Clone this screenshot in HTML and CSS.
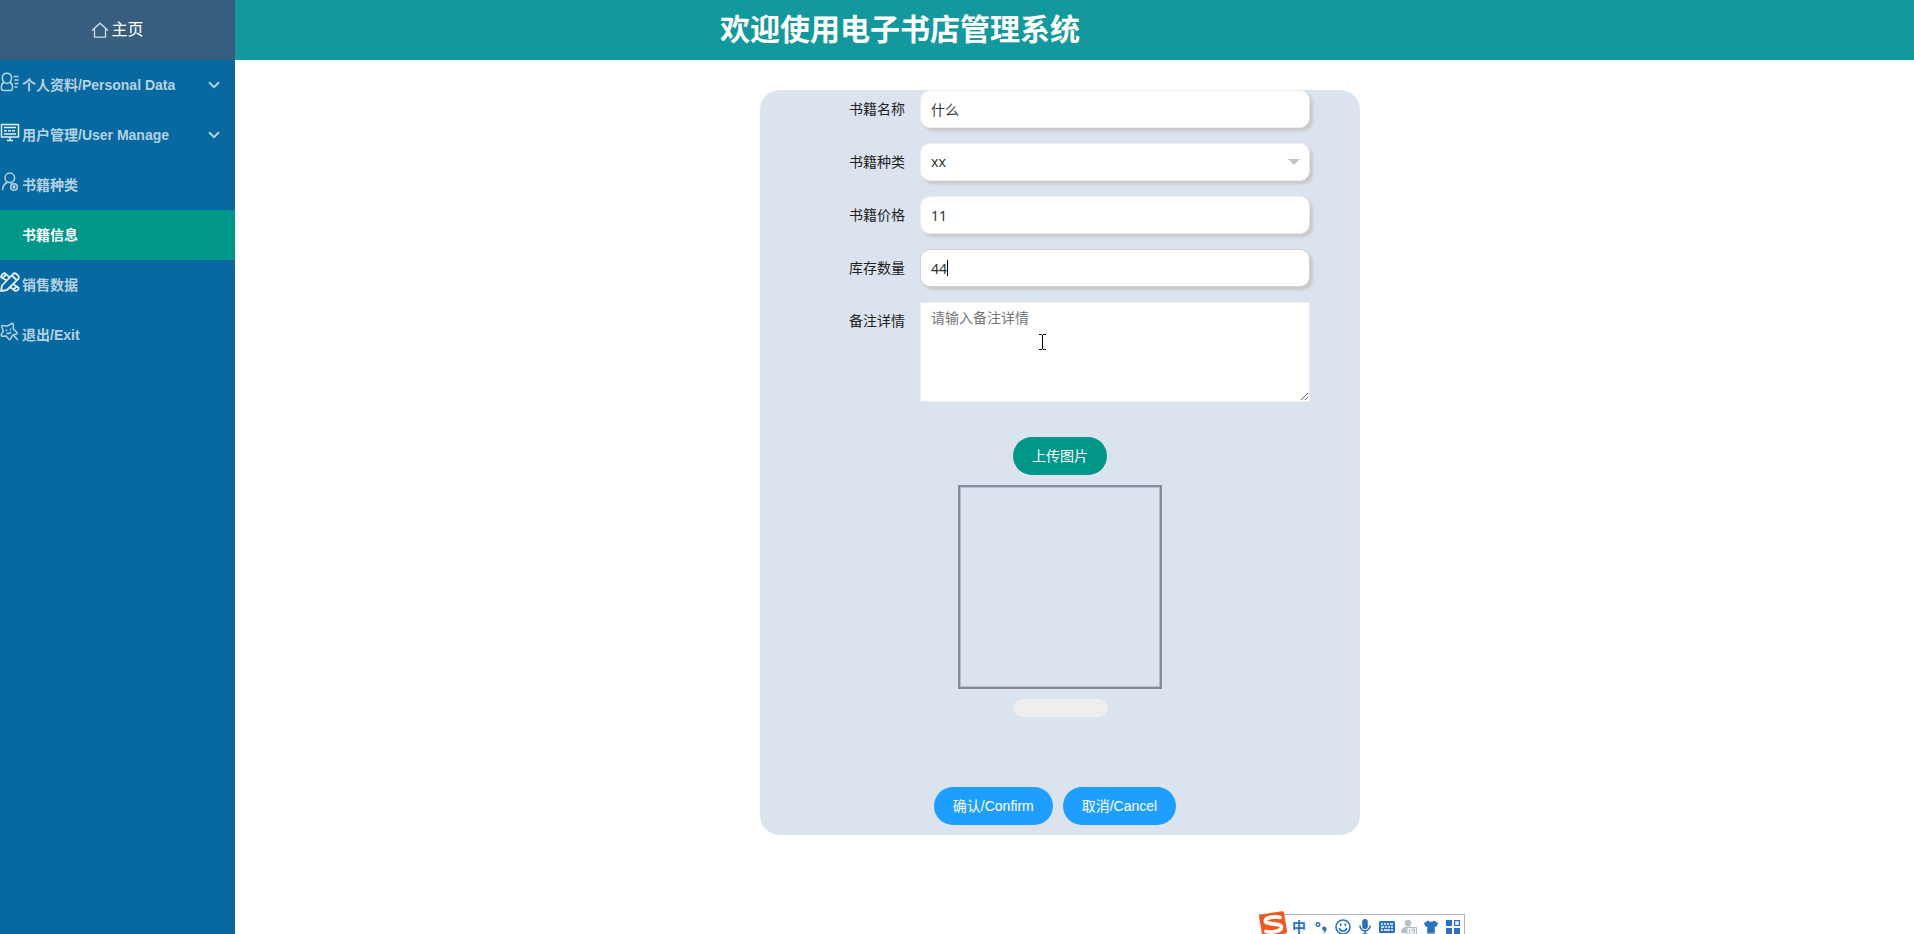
FILE: index.html
```
<!DOCTYPE html>
<html lang="zh-CN">
<head>
<meta charset="utf-8">
<meta name="viewport" content="width=device-width, initial-scale=1.0">
<title>电子书店管理系统</title>
<link rel="stylesheet" href="styles.css">
</head>
<body>
<div class="layout">
	<aside class="side">
		<a class="home" href="#">
			<svg class="home-icon" width="18" height="16" viewBox="0 0 18 16"><path d="M1 8.500 9 1.200l8 7.300M3.500 7v8.200h11V7"/></svg>
			<span>主页</span>
		</a>
		<nav class="nav">
			<a class="nav-item" href="#">
				<svg class="nav-icon" viewBox="0 0 20 20"><path d="M4 10.200C2.600 9 2.300 7.600 2.300 6c0-3 1.900-4.800 4.600-4.800S11.500 3 11.500 6c0 1.600-.4 3-1.700 4.200M4 10.200C2.200 11 1.400 12.600 1.400 14.500v1.800c0 1.400.8 2.200 2.200 2.200h6.700c1.400 0 2.200-.8 2.200-2.200v-1.800c0-1.900-.9-3.500-2.700-4.300-1.600 1.400-4.200 1.400-5.800 0zM13.500 4.500h5M14.500 8h4M14.500 11.500h4M14.500 15h3"/></svg>
				<span>个人资料/Personal Data</span>
				<svg class="arrow" viewBox="0 0 12 8"><path d="m1 1.200 5 5 5-5"/></svg>
			</a>
			<a class="nav-item" href="#">
				<svg class="nav-icon bright" viewBox="0 0 20 20"><path d="M1.500 2.500h17v12.500h-17zM4 5.500h12M4 12h12M10 15v3M7 18.500h6"/><path stroke-dasharray="3 1" d="M4 8.800h12"/></svg>
				<span>用户管理/User Manage</span>
				<svg class="arrow" viewBox="0 0 12 8"><path d="m1 1.200 5 5 5-5"/></svg>
			</a>
			<a class="nav-item" href="#">
				<svg class="nav-icon" viewBox="0 0 20 20"><circle cx="9.800" cy="5.800" r="4.800"/><path d="M7.500 10.200C4.500 11.500 2.700 14 2.500 18M10 10.600l1.500.6"/><circle cx="14" cy="15" r="3.300"/><path d="M12.500 14.500h3M14 13v3.500M12.700 16h2.500"/></svg>
				<span>书籍种类</span>
			</a>
			<a class="nav-item active" href="#">
				<span class="nav-icon"></span>
				<span>书籍信息</span>
			</a>
			<a class="nav-item" href="#">
				<svg class="nav-icon bright thick" viewBox="0 0 20 20"><path d="M1 19 2 13.500 13 2c1-1 2.400-1 3.400 0l1.700 1.700c1 1 1 2.400 0 3.400L7 18zM12 3.500l4.500 4.500M7 8.500 1.300 5.500C.4 4 3 1 4.800 1.200l4.500 4M12.800 12l5.600 3.500c1 1.800-1.600 4-3.400 3.300L10 15M2.500 6l3-3M13.500 17.500l3.500-3"/></svg>
				<span>销售数据</span>
			</a>
			<a class="nav-item" href="#">
				<svg class="nav-icon" viewBox="0 0 20 20"><path d="M7 4.200 12 1.500c.9-.4 1.500.1 1.400 1l-.2 4.300 3.600 3.500c.6.700.4 1.400-.4 1.700l-4 1.300-1.900 3.700c-.5.800-1.300.8-1.800.1L6.200 14l-4 .2c-1-.1-1.300-.8-.9-1.600l2-3.800-1.600-4c-.2-.9.300-1.500 1.200-1.300zM6.500 7.500v1.500M10.500 6.800v1.500M6.500 11c1.600.9 3.300.5 4.400-1M13.800 13.500l4 4.500"/></svg>
				<span>退出/Exit</span>
			</a>
		</nav>
	</aside>

	<div class="page">
		<header class="top"><h1>欢迎使用电子书店管理系统</h1></header>
		<main class="content">
			<form class="panel">
				<div class="row">
					<label for="bookName">书籍名称</label>
					<div class="field"><input class="control" type="text" id="bookName" value="什么"></div>
				</div>
				<div class="row">
					<label for="bookType">书籍种类</label>
					<div class="field select-box">
						<select class="control" id="bookType"><option>xx</option></select>
					</div>
				</div>
				<div class="row">
					<label for="bookPrice">书籍价格</label>
					<div class="field"><input class="control" type="text" id="bookPrice" value="11"></div>
				</div>
				<div class="row">
					<label for="bookStock">库存数量</label>
					<div class="field">
						<input class="control focused" type="text" id="bookStock" value="44">
						<span class="caret"></span>
					</div>
				</div>
				<div class="row">
					<label for="bookNote">备注详情</label>
					<div class="field">
						<textarea class="note" id="bookNote" placeholder="请输入备注详情"></textarea>
						<svg class="pointer" width="7" height="16" viewBox="0 0 7 16"><path d="M0 .5h3M4 .5h3M3.500 1v14M0 15.500h3M4 15.500h3"/></svg>
					</div>
				</div>

				<div class="upload">
					<button class="btn btn-green" type="button">上传图片</button>
					<div class="preview"></div>
					<div class="progress"></div>
				</div>

				<div class="actions">
					<button class="btn" type="button">确认/Confirm</button>
					<button class="btn" type="button">取消/Cancel</button>
				</div>
			</form>
		</main>
	</div>
</div>

<!-- input method bar, floats over the page -->
<div class="ime">
	<svg class="ime-logo" width="28" height="26" viewBox="0 0 28 26"><path fill="#f05a22" d="M2 3.500 22.500.300c1.500-.2 2.300.4 2.600 1.800L28 20c.2 1.500-.4 2.300-1.800 2.600L6 26c-1.500.2-2.500-.4-2.800-1.800L0 6C-.2 4.600.6 3.700 2 3.500z"/><path fill="none" stroke="#fff" stroke-width="3.800" stroke-linecap="round" d="M21 6.300C15 5.300 6.500 6.500 6.500 10c0 4 16 1.500 16 6.300 0 4.200-10 5.500-15.500 4.200"/></svg>
	<span class="ime-lang">中</span>
	<svg width="12" height="16" viewBox="0 0 12 16"><circle cx="3" cy="5.500" r="1.800" fill="none" stroke="#2a72bd" stroke-width="1.400"/><path fill="#2a72bd" d="M7.500 8c2-1.500 4.300 0 4 2.500-.2 2.300-1.800 3.700-3.500 4 1-.9 1.500-1.700 1.400-2.500C7.500 11.700 6.500 9.500 7.500 8z"/></svg>
	<svg width="16" height="16" viewBox="0 0 16 16" fill="none" stroke="#2a72bd" stroke-width="1.600"><circle cx="8" cy="8" r="7"/><path d="M4.300 9c.7 4 6.700 4 7.400 0M5.700 4.500v2.500M10.300 4.500v2.500"/></svg>
	<svg width="12" height="16" viewBox="0 0 12 16"><rect x="3.200" y="0" width="5.600" height="10" rx="2.800" fill="#2a72bd"/><path fill="none" stroke="#2a72bd" stroke-width="1.600" d="M1 6.500c0 7 10 7 10 0M6 12v3M3 15.200h6"/></svg>
	<svg width="16" height="16" viewBox="0 0 16 16"><rect y="2" width="16" height="12" rx="1.500" fill="#2a72bd"/><path stroke="#fff" stroke-width="1.500" d="M2 5h2M5 5h2M8 5h2M11 5h3M2 8h3M6 8h2M9 8h2M12 8h2M2 11h2M5 11h6M12 11h2"/></svg>
	<svg width="16" height="16" viewBox="0 0 16 16"><circle cx="7" cy="4" r="3.300" fill="#b7bfcc"/><path fill="#b7bfcc" d="M0 14c0-5 3-6.500 7-6.500 2 0 3.500.3 4.500 1V14z"/><path fill="#fff" stroke="#b7bfcc" d="M6 8.500h9.500V15H6z"/><path fill="none" stroke="#b7bfcc" stroke-width="1.200" d="M8.500 10v4M13.500 14v-4h-2.500v2h2.500"/></svg>
	<svg width="14" height="14" viewBox="0 0 14 14"><path fill="#2a72bd" d="M4 .5c1 1.800 5 1.800 6 0l4 2.500-1.500 4-1.700-.7V13.500H3.200V6.300L1.500 7 0 3z"/></svg>
	<svg width="14" height="14" viewBox="0 0 14 14"><path fill="#2a72bd" d="M0 0h6v6H0zM0 8h6v6H0zM8 8h6v6H8z"/><path fill="none" stroke="#2a72bd" stroke-width="1.200" d="M8.600.6h4.800v4.800H8.600z"/></svg>
</div>
</body>
</html>
```
FILE: styles.css
```
* {box-sizing:border-box;}
body {margin:0;background:#fff;color:#222;font:14px/24px "Liberation Sans","Noto Sans CJK SC",sans-serif;}
a {color:inherit;text-decoration:none;}
svg {flex:none;}
.layout {display:flex;min-height:100vh;}

.side {flex:none;width:235px;background:#0769a0;}
.home {display:flex;align-items:center;justify-content:center;gap:2px;height:60px;background:#375d7f;color:#fff;font-size:16px;}
.home-icon {fill:none;stroke:#d0dfea;stroke-width:1.3;}
.nav-item {display:flex;align-items:center;gap:2px;height:50px;padding-right:15px;color:#b5d2e3;font-weight:bold;}
.nav-icon {width:20px;height:20px;margin-bottom:6px;fill:none;stroke:#b5d2e3;stroke-width:1.5;stroke-linejoin:round;}
.bright {stroke:#e0f0fa;}
.thick {stroke-width:1.8;}
.arrow {width:12px;height:8px;margin-left:auto;fill:none;stroke:#b5d2e3;stroke-width:2;}
.active {background:#009688;color:#fff;}

.page {flex:1;min-width:0;}
.top {height:60px;padding-left:485px;background:#13999d;color:#fff;}
.top h1 {margin:0;font-size:30px;line-height:60px;white-space:nowrap;}
.content {padding:30px 29px 30px 0;}
.panel {width:100%;max-width:600px;margin:0 auto;padding:0 50px 10px;border-radius:20px;background:#dbe3ee;}

.row {display:flex;margin-bottom:15px;}
.row label {flex:none;width:110px;padding:8px 15px;line-height:22px;text-align:right;}
.field {position:relative;flex:none;width:390px;}
.control,.note {display:block;width:100%;border:1px solid #eee;background:#fff;color:#333;font:14px/20px "Noto Sans","Noto Sans CJK SC",sans-serif;outline:none;}
.control {height:38px;padding:0 10px;border-radius:10px;box-shadow:3px 3px 3px #c8c8c8;appearance:none;}
.focused {border-color:#d2d2d2;}
.select-box::after {content:"";position:absolute;top:16px;right:10px;border:6px solid transparent;border-top-color:#c2c2c2;}
.caret {position:absolute;top:11px;left:27px;width:1px;height:16px;background:#000;}
.note {height:100px;padding:5px 10px;resize:vertical;}
.note::placeholder {color:#757575;}
.pointer {position:absolute;top:32px;left:119px;stroke:#000;stroke-width:1;}

.btn {height:38px;padding:0 18px;border:1px solid transparent;border-radius:100px;background:#1e9fff;color:#fff;font:inherit;cursor:pointer;}
.btn-green {background:#009688;}
.upload {display:flex;flex-direction:column;align-items:center;gap:10px;padding-top:20px;}
.preview {width:204px;height:204px;border:2px solid #8a8a9f;outline:1px solid #b9bccb;outline-offset:-3px;}
.progress {width:95px;height:18px;border-radius:20px;background:#eee;}
.actions {display:flex;justify-content:center;gap:10px;padding:70px 10px 0 0;}

.ime {position:fixed;right:449px;bottom:-4px;display:grid;grid-template-columns:repeat(8,22px);align-items:center;justify-items:center;height:24px;padding-left:29px;border:1px solid #a9b4c8;border-left:0;background:#fff;}
.ime-logo {position:absolute;left:0;top:-4px;}
.ime-lang {color:#2a72bd;font-weight:bold;font-size:14px;}
```
